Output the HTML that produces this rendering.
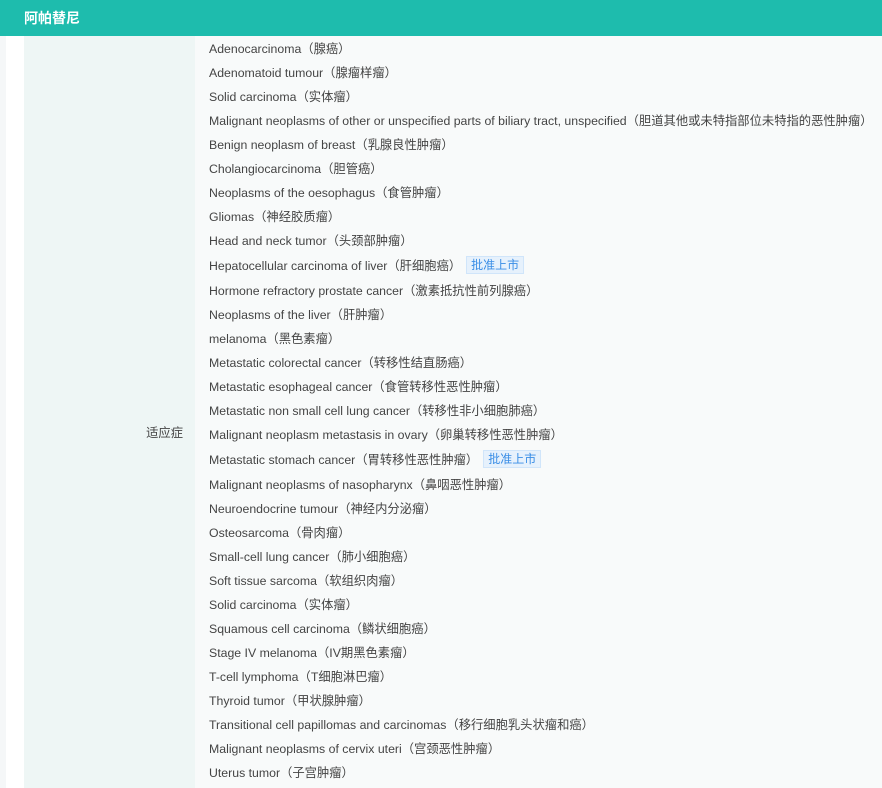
<!DOCTYPE html>
<html><head><meta charset="utf-8"><style>
*{margin:0;padding:0;box-sizing:border-box}
body{width:882px;height:788px;overflow:hidden;background:#f5f7f8;font-family:"Liberation Sans","Noto Sans CJK SC",sans-serif;font-size:12.3px;color:#444}
.hd{height:36px;background:#1ebcad;color:#fff;font-weight:bold;font-size:14px;line-height:36px;padding-left:24px}
.wrap{position:absolute;left:6px;top:36px;width:876px;height:752px;background:#fff}
.lab{position:absolute;left:18px;top:0;width:171px;height:752px;background:#eef6f5;line-height:20px}
.lab span{position:absolute;right:12px;top:387px}
.con{position:absolute;left:189px;top:0;width:700px;height:752px;background:#f8fafa;padding-left:14px;padding-top:1px;white-space:nowrap}
.r{height:24px;line-height:24px}
.b{height:26px;line-height:26px}
.t{display:inline-block;background:#e6f1fc;border:1px solid #d0e5fa;color:#3a8ee6;font-size:12px;line-height:16px;padding:0 4px;margin-left:5px;vertical-align:1px}
</style></head><body>
<div class="hd">阿帕替尼</div>
<div class="wrap">
<div class="lab"><span>适应症</span></div>
<div class="con">
<div class="r">Adenocarcinoma（腺癌）</div>
<div class="r">Adenomatoid tumour（腺瘤样瘤）</div>
<div class="r">Solid carcinoma（实体瘤）</div>
<div class="r">Malignant neoplasms of other or unspecified parts of biliary tract, unspecified（胆道其他或未特指部位未特指的恶性肿瘤）</div>
<div class="r">Benign neoplasm of breast（乳腺良性肿瘤）</div>
<div class="r">Cholangiocarcinoma（胆管癌）</div>
<div class="r">Neoplasms of the oesophagus（食管肿瘤）</div>
<div class="r">Gliomas（神经胶质瘤）</div>
<div class="r">Head and neck tumor（头颈部肿瘤）</div>
<div class="b">Hepatocellular carcinoma of liver（肝细胞癌）<span class="t">批准上市</span></div>
<div class="r">Hormone refractory prostate cancer（激素抵抗性前列腺癌）</div>
<div class="r">Neoplasms of the liver（肝肿瘤）</div>
<div class="r">melanoma（黑色素瘤）</div>
<div class="r">Metastatic colorectal cancer（转移性结直肠癌）</div>
<div class="r">Metastatic esophageal cancer（食管转移性恶性肿瘤）</div>
<div class="r">Metastatic non small cell lung cancer（转移性非小细胞肺癌）</div>
<div class="r">Malignant neoplasm metastasis in ovary（卵巢转移性恶性肿瘤）</div>
<div class="b">Metastatic stomach cancer（胃转移性恶性肿瘤）<span class="t">批准上市</span></div>
<div class="r">Malignant neoplasms of nasopharynx（鼻咽恶性肿瘤）</div>
<div class="r">Neuroendocrine tumour（神经内分泌瘤）</div>
<div class="r">Osteosarcoma（骨肉瘤）</div>
<div class="r">Small-cell lung cancer（肺小细胞癌）</div>
<div class="r">Soft tissue sarcoma（软组织肉瘤）</div>
<div class="r">Solid carcinoma（实体瘤）</div>
<div class="r">Squamous cell carcinoma（鳞状细胞癌）</div>
<div class="r">Stage IV melanoma（IV期黑色素瘤）</div>
<div class="r">T-cell lymphoma（T细胞淋巴瘤）</div>
<div class="r">Thyroid tumor（甲状腺肿瘤）</div>
<div class="r">Transitional cell papillomas and carcinomas（移行细胞乳头状瘤和癌）</div>
<div class="r">Malignant neoplasms of cervix uteri（宫颈恶性肿瘤）</div>
<div class="r">Uterus tumor（子宫肿瘤）</div>
</div>
</div>
</body></html>
